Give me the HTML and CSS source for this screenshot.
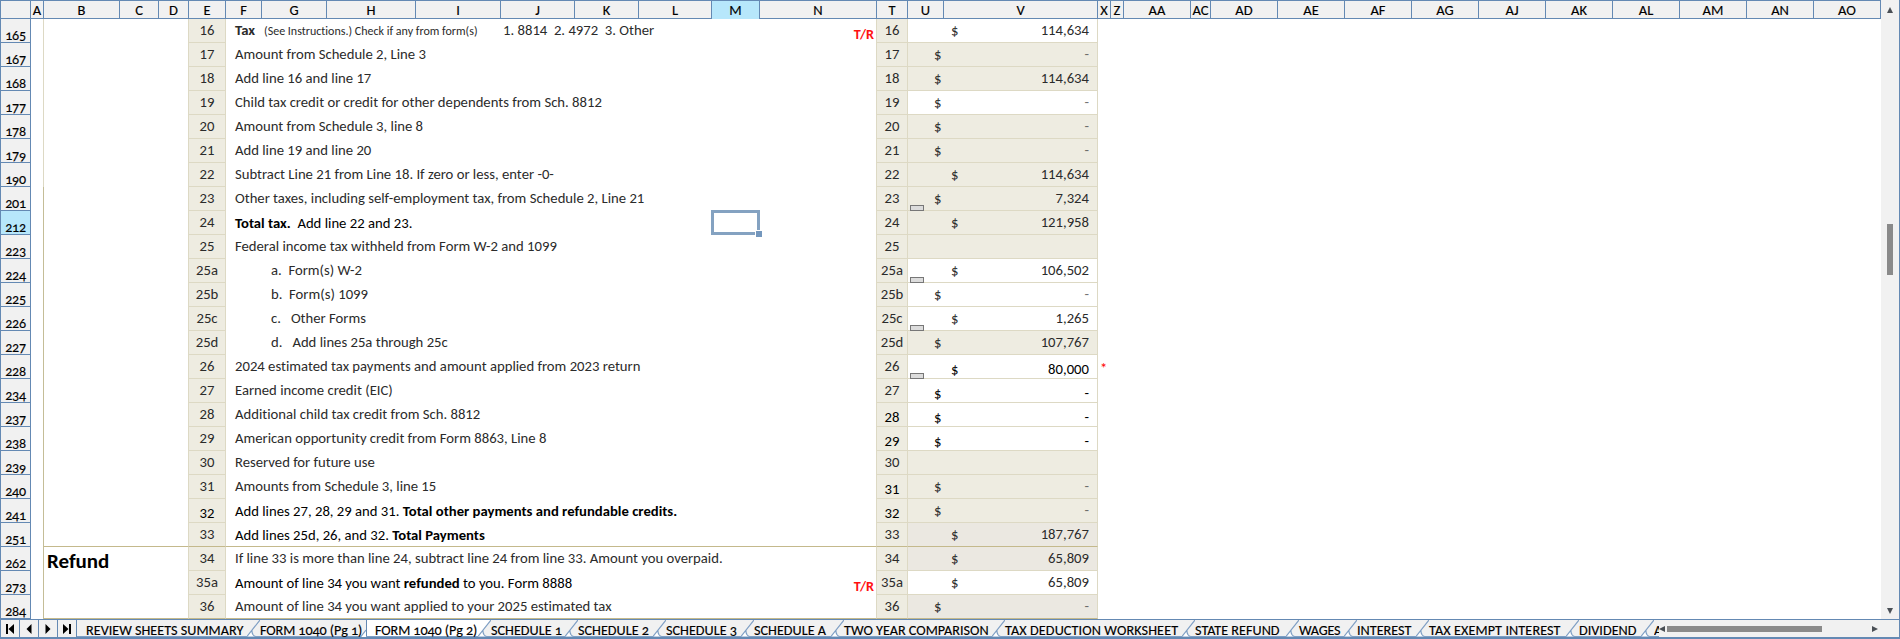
FILE: index.html
```html
<!DOCTYPE html>
<html lang="en">
<head>
<meta charset="utf-8">
<title>Form 1040 (Pg 2)</title>
<link rel="stylesheet" href="styles.css">
</head>
<body>
<svg class="defs" width="0" height="0">
  <symbol id="slant" viewBox="0 0 13 17"><path d="M0 16.5 5 9.5V12Q5.500 15.500 8.500 16.500Z" fill="#fff"/><path d="M0 16.500 13 0M5 10V12Q5.500 15.500 8.500 16.500" fill="none" stroke="#7f9fc4" stroke-width="1.200"/></symbol>
</svg>
<div class="app">
  <div class="main">
    <div class="sheet">
      <div class="columns">
        <div></div><div>A</div><div>B</div><div>C</div><div>D</div><div>E</div><div>F</div><div>G</div><div>H</div><div>I</div><div>J</div><div>K</div><div>L</div><div class="picked">M</div><div>N</div><div>T</div><div>U</div><div>V</div><div>X</div><div>Z</div><div>AA</div><div>AC</div><div>AD</div><div>AE</div><div>AF</div><div>AG</div><div>AJ</div><div>AK</div><div>AL</div><div>AM</div><div>AN</div><div>AO</div>
      </div>
      <div class="rows">
        <div class="row light"><div class="num">165</div><div class="part"></div><div class="line">16</div><div class="desc"><b>Tax</b><small>(See Instructions.) Check if any from form(s)</small><span>1. 8814  2. 4972  3. Other</span><em>T/R</em></div><div class="line">16</div><div class="val in white"><i>$</i>114,634</div></div>
        <div class="row light"><div class="num">167</div><div class="part"></div><div class="line">17</div><div class="desc">Amount from Schedule 2, Line 3</div><div class="line">17</div><div class="val"><i>$</i><s>-</s></div></div>
        <div class="row light"><div class="num">168</div><div class="part"></div><div class="line">18</div><div class="desc">Add line 16 and line 17</div><div class="line">18</div><div class="val"><i>$</i>114,634</div></div>
        <div class="row light"><div class="num">177</div><div class="part"></div><div class="line">19</div><div class="desc">Child tax credit or credit for other dependents from Sch. 8812</div><div class="line">19</div><div class="val white"><i>$</i><s>-</s></div></div>
        <div class="row light"><div class="num">178</div><div class="part"></div><div class="line">20</div><div class="desc">Amount from Schedule 3, line 8</div><div class="line">20</div><div class="val"><i>$</i><s>-</s></div></div>
        <div class="row light"><div class="num">179</div><div class="part"></div><div class="line">21</div><div class="desc">Add line 19 and line 20</div><div class="line">21</div><div class="val"><i>$</i><s>-</s></div></div>
        <div class="row light"><div class="num">190</div><div class="part"></div><div class="line">22</div><div class="desc">Subtract Line 21 from Line 18. If zero or less, enter -0-</div><div class="line">22</div><div class="val in"><i>$</i>114,634</div></div>
        <div class="row"><div class="num">201</div><div class="part"></div><div class="line">23</div><div class="desc">Other taxes, including self-employment tax, from Schedule 2, Line 21</div><div class="line">23</div><div class="val"><u></u><i>$</i>7,324</div></div>
        <div class="row"><div class="num picked">212</div><div class="part"></div><div class="line">24</div><div class="desc crisp"><b>Total tax.</b>  Add line 22 and 23.<div class="cursor"></div></div><div class="line">24</div><div class="val in"><i>$</i>121,958</div></div>
        <div class="row"><div class="num">223</div><div class="part"></div><div class="line">25</div><div class="desc">Federal income tax withheld from Form W-2 and 1099</div><div class="line">25</div><div class="val"></div></div>
        <div class="row"><div class="num">224</div><div class="part"></div><div class="line">25a</div><div class="desc sub">a.  Form(s) W-2</div><div class="line">25a</div><div class="val in white"><u></u><i>$</i>106,502</div></div>
        <div class="row"><div class="num">225</div><div class="part"></div><div class="line">25b</div><div class="desc sub">b.  Form(s) 1099</div><div class="line">25b</div><div class="val white"><i>$</i><s>-</s></div></div>
        <div class="row"><div class="num">226</div><div class="part"></div><div class="line">25c</div><div class="desc sub">c.   Other Forms</div><div class="line">25c</div><div class="val in white"><u></u><i>$</i>1,265</div></div>
        <div class="row"><div class="num">227</div><div class="part"></div><div class="line">25d</div><div class="desc sub">d.   Add lines 25a through 25c</div><div class="line">25d</div><div class="val"><i>$</i>107,767</div></div>
        <div class="row"><div class="num">228</div><div class="part"></div><div class="line">26</div><div class="desc">2024 estimated tax payments and amount applied from 2023 return</div><div class="line">26</div><div class="val in white low"><u></u><i>$</i>80,000</div><div class="star">*</div></div>
        <div class="row"><div class="num">234</div><div class="part"></div><div class="line">27</div><div class="desc">Earned income credit (EIC)</div><div class="line">27</div><div class="val white low"><i>$</i><s>-</s></div></div>
        <div class="row"><div class="num">237</div><div class="part"></div><div class="line">28</div><div class="desc">Additional child tax credit from Sch. 8812</div><div class="line low">28</div><div class="val white low"><i>$</i><s>-</s></div></div>
        <div class="row"><div class="num">238</div><div class="part"></div><div class="line">29</div><div class="desc">American opportunity credit from Form 8863, Line 8</div><div class="line low">29</div><div class="val white low"><i>$</i><s>-</s></div></div>
        <div class="row"><div class="num">239</div><div class="part"></div><div class="line">30</div><div class="desc">Reserved for future use</div><div class="line">30</div><div class="val"></div></div>
        <div class="row"><div class="num">240</div><div class="part"></div><div class="line">31</div><div class="desc">Amounts from Schedule 3, line 15</div><div class="line low">31</div><div class="val"><i>$</i><s>-</s></div></div>
        <div class="row"><div class="num">241</div><div class="part"></div><div class="line low">32</div><div class="desc crisp">Add lines 27, 28, 29 and 31. <b>Total other payments and refundable credits.</b></div><div class="line low">32</div><div class="val"><i>$</i><s>-</s></div></div>
        <div class="row rule"><div class="num">251</div><div class="part"></div><div class="line">33</div><div class="desc crisp">Add lines 25d, 26, and 32. <b>Total Payments</b></div><div class="line">33</div><div class="val in grey"><i>$</i>187,767</div></div>
        <div class="row"><div class="num">262</div><div class="part">Refund</div><div class="line">34</div><div class="desc">If line 33 is more than line 24, subtract line 24 from line 33. Amount you overpaid.</div><div class="line">34</div><div class="val in grey"><i>$</i>65,809</div></div>
        <div class="row"><div class="num">273</div><div class="part"></div><div class="line">35a</div><div class="desc crisp">Amount of line 34 you want <b>refunded</b> to you. Form 8888<em>T/R</em></div><div class="line">35a</div><div class="val in white"><i>$</i>65,809</div></div>
        <div class="row rule"><div class="num">284</div><div class="part"></div><div class="line">36</div><div class="desc">Amount of line 34 you want applied to your 2025 estimated tax</div><div class="line">36</div><div class="val grey"><i>$</i><s>-</s></div></div>
        <div class="row"><div class="num"></div><div class="part"></div><div class="line"></div><div class="desc"></div><div class="line"></div><div class="val grey"></div></div>
      </div>
    </div>
    <div class="vscroll">
      <svg width="6" height="6"><path d="M3 0 6 6H0Z"/></svg>
      <div class="vthumb"></div>
      <svg width="6" height="6"><path d="M0 0H6L3 6Z"/></svg>
    </div>
  </div>
  <div class="footer">
    <div class="nav">
      <div><svg width="10" height="10"><path d="M1 0H3V10H1ZM9 0V10L3.500 5Z"/></svg></div>
      <div><svg width="10" height="10"><path d="M7.500 0V10L2.500 5Z"/></svg></div>
      <div><svg width="10" height="10"><path d="M2.500 0V10L7.500 5Z"/></svg></div>
      <div><svg width="10" height="10"><path d="M9 0H7V10H9ZM1 0V10L6.500 5Z"/></svg></div>
    </div>
    <div class="tabs">
      <div class="tab t1">REVIEW SHEETS SUMMARY</div><svg class="sep"><use href="#slant"/></svg>
      <div class="tab t2">FORM 1040 (Pg 1)</div><svg class="sep cut" viewBox="0 0 5 17"><path d="M0 17 5 10V17Z" fill="#fff"/><path d="M0 16.500 5 10" stroke="#7f9fc4" stroke-width="1.200"/></svg>
      <div class="tab active">FORM 1040 (Pg 2)</div><svg class="sep"><path d="M0 0H13L0 17Z" fill="#fff"/><use href="#slant"/></svg>
      <div class="tab t4">SCHEDULE 1</div><svg class="sep"><use href="#slant"/></svg>
      <div class="tab t5">SCHEDULE 2</div><svg class="sep"><use href="#slant"/></svg>
      <div class="tab t5">SCHEDULE 3</div><svg class="sep"><use href="#slant"/></svg>
      <div class="tab t7">SCHEDULE A</div><svg class="sep"><use href="#slant"/></svg>
      <div class="tab t8">TWO YEAR COMPARISON</div><svg class="sep"><use href="#slant"/></svg>
      <div class="tab t9">TAX DEDUCTION WORKSHEET</div><svg class="sep"><use href="#slant"/></svg>
      <div class="tab t10">STATE REFUND</div><svg class="sep"><use href="#slant"/></svg>
      <div class="tab t11">WAGES</div><svg class="sep"><use href="#slant"/></svg>
      <div class="tab t12">INTEREST</div><svg class="sep"><use href="#slant"/></svg>
      <div class="tab t13">TAX EXEMPT INTEREST</div><svg class="sep"><use href="#slant"/></svg>
      <div class="tab t14">DIVIDEND</div><svg class="sep"><use href="#slant"/></svg>
      <div class="tab t15">A</div>
    </div>
    <div class="hscroll">
      <svg width="6" height="6"><path d="M6 0V6L0 3Z"/></svg>
      <div class="hthumb"></div>
      <svg width="6" height="6"><path d="M0 0V6L6 3Z"/></svg>
    </div>
  </div>
</div>
</body>
</html>
```

FILE: styles.css
```css
* { box-sizing: border-box; }
body { margin: 0; background: #fff; font-family: Carlito, Lato, sans-serif; font-variant-ligatures: none; }
.defs { position: absolute; }

.app {
  width: 1900px;
  height: 639px;
  overflow: hidden;
  display: flex;
  flex-direction: column;
  border: 1px solid #6489b3;
  border-top: 0;
}
.main { display: flex; height: 620px; overflow: hidden; }
.sheet { width: 1881px; margin-left: -1px; flex: none; }

.columns {
  display: grid;
  grid-template-columns: 31px 13px 76px 39px 30px 37px 36px 65px 89px 85px 74px 64px 73px 48px 117px 31px 36px 154px 13px 13px 67px 20px repeat(10, 67px);
  width: 1881px;
  height: 19px;
  background: #f1f1f1;
  border-top: 1px solid #6489b3;
  border-bottom: 1px solid #6489b3;
}
.columns div {
  border-right: 1px solid #6489b3;
  text-align: center;
  font-size: 14.5px;
  line-height: 18px;
  color: #000;
  -webkit-text-stroke: .15px #000;
}
.columns .picked, .num.picked { background: #b7e7fb; }

.rows { height: 601px; overflow: hidden; }
.row {
  display: flex;
  height: 24px;
  font-size: 14.7px;
  line-height: 23px;
  color: #2b2b2b;
  white-space: pre;
}
.num {
  width: 31px;
  margin-right: 12px;
  overflow: hidden;
  background: #f1f1f1;
  border-right: 1px solid #6489b3;
  border-bottom: 1px solid #6489b3;
  border-left: 1px solid #6489b3;
  text-align: center;
  font-size: 14px;
  line-height: 34px;
  font-variant-numeric: oldstyle-nums;
  letter-spacing: -.3px;
  color: #000;
  -webkit-text-stroke: .15px #000;
}
.part {
  width: 145px;
  padding-left: 3px;
  border-left: 1px solid #c4bd97;
  font-size: 21px;
  line-height: 29px;
  font-weight: bold;
  color: #000;
}
.light .part { border-left-color: #ddd9c4; }
.line {
  width: 38px;
  background: #eeece1;
  border: 1px solid #ddd9c4;
  border-top: 0;
  text-align: center;
}
.desc { position: relative; width: 650px; padding-left: 9px; }
.desc + .line { width: 32px; }
.desc.sub { padding-left: 45px; }
.desc.crisp, .low { color: #000; }
.desc.crisp { line-height: 24px; }
.line.low, .val.low { line-height: 28px; }
.desc small { display: inline-block; width: 239px; margin-left: 9px; font-size: 12px; }
.desc em {
  position: absolute;
  right: 2px;
  top: 4px;
  line-height: 23px;
  font-style: normal;
  font-weight: bold;
  font-size: 14.2px;
  color: #ff1010;
}
.cursor {
  position: absolute;
  left: 485px;
  top: -1px;
  width: 49px;
  height: 25px;
  border: 3px solid #84a2c1;
}
.cursor::after {
  content: "";
  position: absolute;
  right: -5px;
  bottom: -5px;
  width: 6px;
  height: 6px;
  background: #7497bd;
  border-left: 1px solid #fff;
  border-top: 1px solid #fff;
}
.val {
  position: relative;
  display: flex;
  justify-content: space-between;
  width: 190px;
  padding: 0 8px 0 26px;
  background: #eeece1;
  border-right: 1px solid #ddd9c4;
  border-bottom: 1px solid #ddd9c4;
}
.val.in { padding-left: 43px; }
.val.white { background: #fff; }
.val.grey { background: #ebe8e1; }
.val i { font-style: normal; }
.val s { text-decoration: none; opacity: .65; }
.val.low s { opacity: 1; }
.val u {
  position: absolute;
  left: 2px;
  bottom: -1px;
  width: 14px;
  height: 6px;
  background: #dcdcdc;
  border: 1px solid #777;
  z-index: 1;
}
.star { padding-left: 2px; line-height: 26px; color: #f00; }
.rule > .part, .rule > .desc { border-bottom: 1px solid #c4b98c; }
.rule > .line, .rule > .val { border-bottom-color: #c4b98c; }

.vscroll {
  display: flex;
  flex-direction: column;
  align-items: center;
  width: 18px;
  padding-top: 7px;
  background: #f1f1f1;
  fill: #4a4f55;
}
.vthumb { width: 6px; height: 51px; margin: 211px 0 333px; background: #8a8a8a; }

.footer {
  display: flex;
  height: 19px;
  background: #f1f1f1;
  border-top: 1px solid #6489b3;
  border-bottom: 1px solid #6489b3;
}
.nav { display: flex; }
.nav div {
  display: flex;
  align-items: center;
  justify-content: center;
  width: 19px;
  border-right: 1px solid #6489b3;
}
.tabs {
  display: flex;
  width: 1582px;
  border-bottom: 1px solid #7f9fc4;
}
.tab {
  flex: none;
  height: 16px;
  padding-top: 2px;
  font-size: 14.2px;
  line-height: 16px;
  white-space: nowrap;
  font-variant-numeric: oldstyle-nums;
  color: #000;
  -webkit-text-stroke: .15px #000;
}
.sep { flex: none; width: 13px; height: 17px; }
.sep.cut { width: 5px; }
.t1 { width: 170px; padding-left: 9px; }
.t2 { width: 101px; letter-spacing: -.1px; }
.active { width: 112px; padding-left: 8px; background: #fff; border-left: 1px solid #6489b3; letter-spacing: -.1px; }
.t4 { width: 74px; }
.t5 { width: 75px; }
.t7 { width: 77px; }
.t8 { width: 148px; }
.t9 { width: 177px; letter-spacing: .1px; }
.t10 { width: 91px; }
.t11 { width: 45px; letter-spacing: -.2px; }
.t12 { width: 59px; }
.t13 { width: 137px; letter-spacing: .1px; }
.t14 { width: 62px; }
.t15 { width: 5px; overflow: hidden; }
.hscroll { display: flex; align-items: center; fill: #4a4f55; }
.hthumb { width: 155px; height: 6px; margin: 0 50px 0 2px; background: #8a8a8a; }
```
